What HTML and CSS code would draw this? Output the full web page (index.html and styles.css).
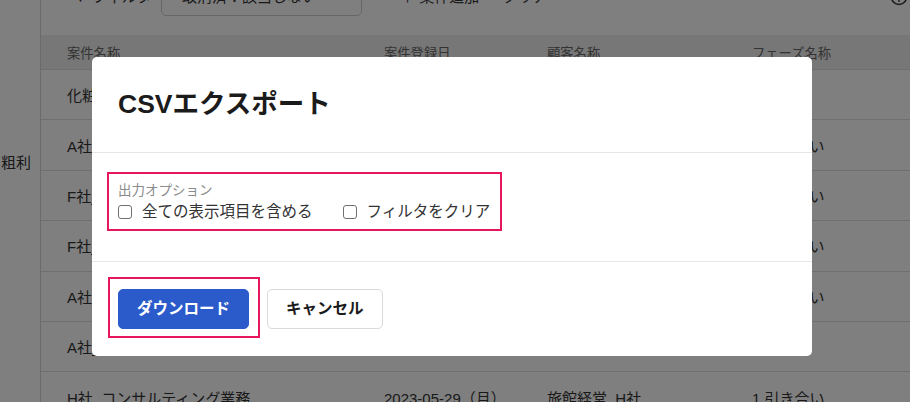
FILE: index.html
```html
<!DOCTYPE html>
<html lang="ja">
<head>
<meta charset="utf-8">
<title>CSVエクスポート</title>
<link rel="stylesheet" href="styles.css">
</head>
<body>
<div class="page">
  <aside class="side"><span class="side-label">粗利</span></aside>
  <main class="main">
    <div class="toolbar">
      <span class="tb-filter">▼ フィルタ</span>
      <div class="select">取消済：該当しない</div>
      <span class="tb-add">＋ 案件追加 ・ クリア</span>
      <svg class="help" width="18" height="18" viewBox="0 0 18 18"><circle cx="9" cy="9" r="7.5" fill="none" stroke="#333" stroke-width="1.6"/><path d="M6.8 7a2.2 2.2 0 1 1 3.2 2c-.7.4-1 .8-1 1.6" fill="none" stroke="#333" stroke-width="1.5"/><circle cx="9" cy="13" r=".9" fill="#333"/></svg>
    </div>
    <div class="table">
      <div class="row thead">
        <span>案件名称</span><span>案件登録日</span><span>顧客名称</span><span>フェーズ名称</span>
      </div>
      <div class="row"><span>化粧品EC運用支援</span><span>2023-06-01（木）</span><span>化粧品販売_K社</span><span>受注</span></div>
      <div class="row"><span>A社_システム保守</span><span>2023-05-31（水）</span><span>製造業_A社</span><span>1.引き合い</span></div>
      <div class="row"><span>F社_Web制作</span><span>2023-05-31（水）</span><span>小売業_F社</span><span>1.引き合い</span></div>
      <div class="row"><span>F社_広告運用</span><span>2023-05-30（火）</span><span>小売業_F社</span><span>1.引き合い</span></div>
      <div class="row"><span>A社_業務改善支援</span><span>2023-05-30（火）</span><span>製造業_A社</span><span>1.引き合い</span></div>
      <div class="row"><span>A社_追加開発</span><span>2023-05-29（月）</span><span>製造業_A社</span><span>失注</span></div>
      <div class="row"><span>H社_コンサルティング業務</span><span>2023-05-29（月）</span><span>旅館経営_H社</span><span>1.引き合い</span></div>
    </div>
  </main>
</div>

<div class="backdrop"></div>

<div class="modal" role="dialog" aria-labelledby="dlg-title">
  <header class="modal-head">
    <h2 id="dlg-title" class="modal-title">CSVエクスポート</h2>
  </header>
  <section class="modal-body">
    <div class="opts hl">
      <div class="opts-label">出力オプション</div>
      <div class="opts-row">
        <label class="check"><input type="checkbox" class="cb"><span>全ての表示項目を含める</span></label>
        <label class="check"><input type="checkbox" class="cb"><span>フィルタをクリア</span></label>
      </div>
    </div>
  </section>
  <footer class="modal-foot">
    <span class="hl hl-btn"><button class="btn btn-primary">ダウンロード</button></span>
    <button class="btn btn-default">キャンセル</button>
  </footer>
</div>
</body>
</html>
```

FILE: styles.css
```css
* { box-sizing: border-box; }

html, body {
  margin: 0;
  padding: 0;
}

body {
  width: 910px;
  height: 402px;
  overflow: hidden;
  background: #fff;
  color: #333;
  font-family: "Liberation Sans", "Noto Sans CJK JP", sans-serif;
  font-size: 15px;
}

/* ---------- underlying page ---------- */
.page {
  display: flex;
  height: 402px;
  overflow: hidden;
}

.side {
  width: 41px;
  flex: none;
  border-right: 1px solid #d6d6d6;
  padding-top: 151px;
  overflow: hidden;
  white-space: nowrap;
}

.side-label {
  display: block;
  margin-left: 1px;
  font-size: 15px;
  line-height: 24px;
  color: #333;
}

.main {
  flex: 1;
  min-width: 0;
  display: flex;
  flex-direction: column;
}

.toolbar {
  flex: none;
  height: 60px;
  margin-top: -25px;
  padding: 3px 2px 0 32px;
  display: flex;
  align-items: flex-start;
  white-space: nowrap;
}

.tb-filter {
  width: 88px;
  line-height: 38px;
  color: #333;
}

.select {
  width: 201px;
  height: 38px;
  border: 1px solid #cfcfcf;
  border-radius: 5px;
  padding-left: 20px;
  line-height: 36px;
  color: #333;
}

.tb-add {
  margin-left: 38px;
  line-height: 38px;
  color: #333;
}

.help {
  margin-left: auto;
  margin-top: 10px;
}

.table {
  flex: none;
  display: flex;
  flex-direction: column;
}

.row {
  flex: none;
  display: grid;
  grid-template-columns: 317px 163px 205px 200px;
  align-items: center;
  height: 50.4px;
  padding-left: 26px;
  border-bottom: 1px solid #dedede;
  white-space: nowrap;
  color: #333;
  font-size: 15px;
}

.row > span { overflow: hidden; }

.thead {
  height: 35px;
  background: #eeeeee;
  color: #666;
  font-size: 13.3px;
}

/* ---------- overlay ---------- */
.backdrop {
  position: fixed;
  inset: 0;
  background: rgba(0, 0, 0, 0.5);
}

.modal {
  position: fixed;
  left: 92px;
  top: 57px;
  width: 720px;
  background: #fff;
  border-radius: 5px;
  display: flex;
  flex-direction: column;
}

.modal-head {
  padding: 30px 26px;
  border-bottom: 1px solid #e6e6e6;
}

.modal-title {
  margin: 0;
  font-size: 26.5px;
  line-height: 35px;
  font-weight: 700;
  color: #1b1b1b;
}

.modal-body {
  padding: 28px 26px 38px;
  border-bottom: 1px solid #e6e6e6;
}

.opts {
  width: fit-content;
}

.opts-label {
  font-size: 13.5px;
  line-height: 20px;
  color: #8a8a8a;
}

.opts-row {
  display: flex;
  gap: 30px;
  height: 22px;
  align-items: center;
}

.check {
  display: flex;
  align-items: center;
  gap: 10px;
  font-size: 15.5px;
  line-height: 22px;
  color: #333;
}

.cb {
  appearance: none;
  -webkit-appearance: none;
  margin: 0;
  width: 14px;
  height: 14px;
  border: 1px solid #707070;
  border-radius: 3px;
  background: #fff;
}

.modal-foot {
  padding: 27px 26px;
  display: flex;
  gap: 18px;
  align-items: center;
}

.btn {
  height: 40px;
  padding: 0 18px;
  border-radius: 5px;
  font-family: "Liberation Sans", "Noto Sans CJK JP", sans-serif;
  font-size: 15.5px;
  font-weight: 700;
  line-height: 38px;
  cursor: pointer;
}

.btn-primary {
  display: block;
  background: #2b5bcb;
  border: 1px solid #2b5bcb;
  color: #fff;
}

.btn-default {
  background: #fff;
  border: 1px solid #dadada;
  color: #1b1b1b;
}

/* ---------- annotation highlights ---------- */
.hl {
  position: relative;
}

.hl::after {
  content: "";
  position: absolute;
  border: 2px solid #e8175d;
  pointer-events: none;
}

.opts.hl::after {
  top: -9px;
  bottom: -8px;
  left: -11px;
  right: -12px;
}

.hl-btn {
  display: block;
}

.hl-btn::after {
  top: -12px;
  bottom: -9px;
  left: -10px;
  right: -11px;
}
```
